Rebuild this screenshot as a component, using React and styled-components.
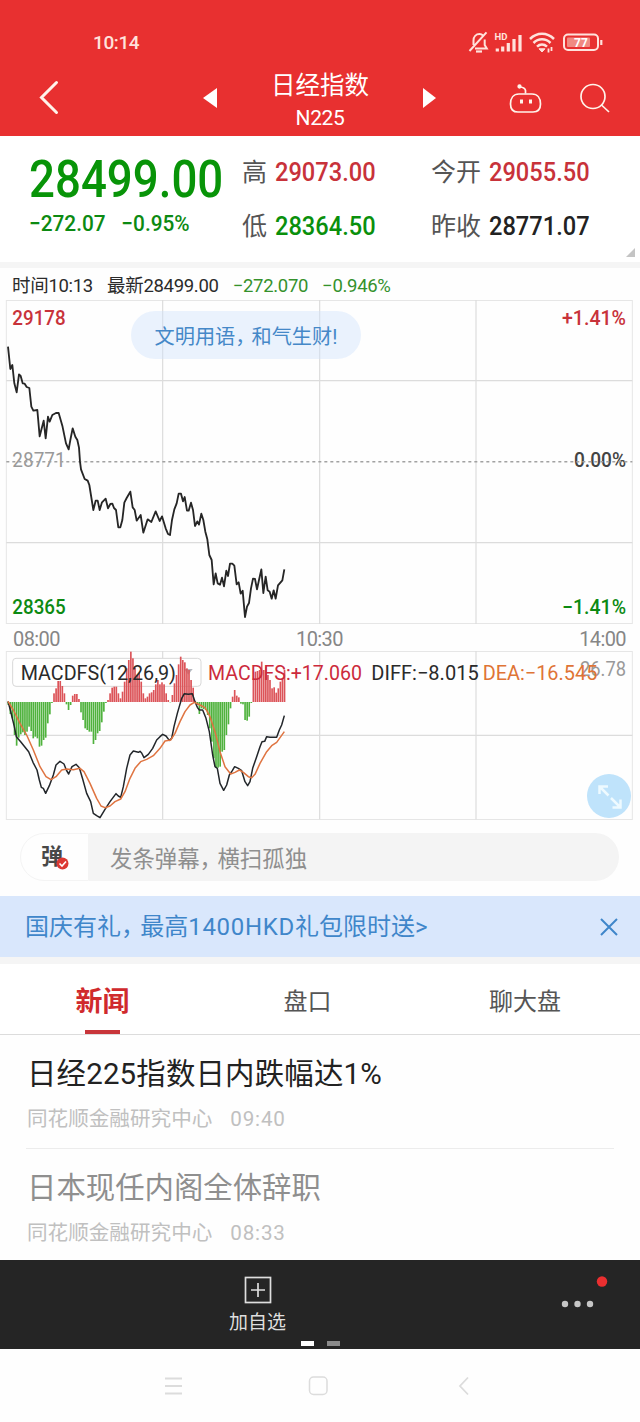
import React from "react";
import styled, { createGlobalStyle } from "styled-components";

const RED = "#c8323a";
const GREEN = "#0c8a12";

const GlobalStyle = createGlobalStyle`
  * {
    box-sizing: border-box;
  }
  body {
    margin: 0;
    background: #fff;
    font-family: Roboto, "Noto Sans CJK SC", sans-serif;
    color: #333;
  }
`;

const Page = styled.div`
  width: 640px;
  height: 1422px;
  overflow: hidden;
  background: #fefefe;
`;

const Header = styled.header`
  height: 136px;
  background: #e83030;
  color: #fff;
`;

const StatusBar = styled.div`
  display: flex;
  align-items: center;
  justify-content: space-between;
  height: 60px;
  padding: 25px 36px 0 93px;
  color: #ffe2dc;
`;

const Clock = styled.span`
  font-size: 19px;
  font-weight: 500;
  letter-spacing: -0.4px;
`;

const TitleBar = styled.div`
  display: grid;
  grid-template-columns: 198px 24px 196px 24px 198px;
  align-items: center;
  height: 76px;
`;

const BackButton = styled.div`
  padding-left: 38px;
  height: 39px;
`;

const TitleText = styled.div`
  text-align: center;
  padding-top: 6px;
`;

const TitleName = styled.div`
  font-size: 24.5px;
  line-height: 33px;
`;

const TitleCode = styled.div`
  font-size: 21px;
  line-height: 32px;
  letter-spacing: -0.4px;
`;

const Tools = styled.div`
  display: flex;
  align-items: center;
  gap: 36px;
  padding-left: 65px;
`;

const Quote = styled.section`
  position: relative;
  display: grid;
  grid-template-columns: 213px 189px 1fr;
  height: 126px;
  padding: 9px 0 0 29px;
  background: #fff;
`;

const LastPrice = styled.div`
  height: 64px;
  line-height: 69px;
  font-size: 51px;
  font-weight: 500;
  color: #089408;
  transform: scaleX(0.895);
  transform-origin: left;
`;

const Change = styled.div`
  display: flex;
  gap: 17px;
  font-size: 22.5px;
  line-height: 28px;
  font-weight: 500;
  color: ${GREEN};
  transform: scaleX(0.925);
  transform-origin: left;
`;

const Field = styled.div`
  display: flex;
  align-items: center;
  gap: 8px;
  height: 54px;
  padding-top: 1px;
  font-size: 25px;
  line-height: 50px;
  color: #555;
`;

const FieldValue = styled.span`
  font-size: 25px;
  font-weight: 500;
  color: ${(props) => props.$color};
  transform: scaleX(0.945);
  transform-origin: left;
`;

const Corner = styled.i`
  position: absolute;
  right: 5px;
  bottom: 5px;
  border-left: 9px solid transparent;
  border-bottom: 9px solid #c4c4c4;
`;

const Divider = styled.div`
  height: ${(props) => props.$height}px;
  background: #f5f5f5;
`;

const InfoLine = styled.div`
  display: flex;
  align-items: center;
  height: 32px;
  padding: 4px 0 0 12px;
  font-size: 18.5px;
  letter-spacing: -0.3px;
  color: #2b2b2b;
  white-space: nowrap;
`;

const InfoItem = styled.span`
  margin-right: 14px;
  line-height: 30px;
  color: ${(props) => props.$color};
`;

const ChartArea = styled.div`
  position: relative;
  height: 324px;
`;

const Chart = styled.svg`
  display: block;
`;

const Bubble = styled.div`
  position: absolute;
  left: 131px;
  top: 11px;
  width: 230px;
  height: 48px;
  border-radius: 24px;
  background: rgba(208, 226, 252, 0.42);
  color: #4588c8;
  font-size: 20.2px;
  line-height: 52px;
  text-align: center;
`;

const Comma = styled.span`
  letter-spacing: -0.2em;
`;

const TimeAxis = styled.div`
  display: flex;
  justify-content: space-between;
  height: 27px;
  padding: 3px 14px 0 13px;
  font-size: 20px;
  line-height: 25px;
  letter-spacing: -0.6px;
  color: #868686;
`;

const MacdArea = styled.div`
  position: relative;
  height: 170px;
`;

const ExpandButton = styled.div`
  position: absolute;
  right: 9px;
  bottom: 3px;
  width: 44px;
  height: 44px;
  border-radius: 50%;
  background: #bfe3fb;
`;

const CommentBar = styled.div`
  display: flex;
  height: 75px;
  padding: 12px 21px 15px 20px;
`;

const DanmuToggle = styled.div`
  display: flex;
  position: relative;
  width: 69px;
  border: 1px solid #f4f4f4;
  border-radius: 24px 0 0 24px;
  padding-left: 20px;
  font-size: 22px;
  line-height: 45px;
  font-weight: 700;
  color: #484848;
`;

const CheckBadge = styled.svg`
  position: absolute;
  left: 35px;
  top: 23px;
`;

const CommentInput = styled.div`
  flex: 1;
  padding-left: 21px;
  border-radius: 0 24px 24px 0;
  background: #f4f4f4;
  font-size: 22.4px;
  line-height: 52px;
  color: #8f8f8f;
`;

const Banner = styled.div`
  display: flex;
  align-items: center;
  justify-content: space-between;
  height: 61px;
  padding: 0 22px 0 25px;
  background: #d9e7fc;
  color: #3f86ca;
  font-size: 24px;
  line-height: 36px;
  white-space: nowrap;
`;

const BannerText = styled.span`
  padding-top: 1px;
`;

const BannerAmount = styled.span`
  letter-spacing: 0.7px;
`;

const Tabs = styled.nav`
  display: grid;
  grid-template-columns: 205px 205px 230px;
  height: 71px;
  background: #fff;
  border-bottom: 1px solid #dcdcdc;
`;

const Tab = styled.div`
  display: flex;
  flex-direction: column;
  align-items: center;
  font-size: ${(props) => (props.$active ? 27 : 24)}px;
  font-weight: ${(props) => (props.$active ? 700 : 400)};
  line-height: 76px;
  color: ${(props) => (props.$active ? "#d02a2d" : "#555")};

  &::after {
    content: "";
    width: 35px;
    height: 4px;
    margin-top: -10px;
    background: ${(props) => (props.$active ? "#c8353a" : "transparent")};
  }
`;

const NewsList = styled.div`
  height: 225px;
  padding: 0 26px;
`;

const NewsItem = styled.article`
  height: 114px;
  padding: 17px 1px 0;
  border-bottom: 1px solid #ececec;

  &:last-child {
    border-bottom: none;
  }
`;

const NewsTitle = styled.div`
  font-size: 29.4px;
  line-height: 44px;
  letter-spacing: ${(props) => (props.$read ? 0 : 0.2)}px;
  color: ${(props) => (props.$read ? "#8f8f8f" : "#222")};
`;

const NewsMeta = styled.div`
  display: flex;
  gap: 18px;
  margin-top: 7px;
  font-size: 20.6px;
  line-height: 32px;
  color: #c0c0c0;
`;

const NewsTime = styled.span`
  letter-spacing: 0.8px;
`;

const BottomBar = styled.footer`
  position: relative;
  display: flex;
  height: 89px;
  background: #252525;
  color: #dedede;
`;

const AddButton = styled.div`
  display: flex;
  flex-direction: column;
  align-items: center;
  width: 515px;
  padding-top: 16px;
  font-size: 19px;
  line-height: 37px;
`;

const MoreButton = styled.div`
  padding: 16px 0 0 46px;
`;

const Pager = styled.div`
  position: absolute;
  left: 301px;
  bottom: 3px;
  display: flex;
  gap: 13px;
`;

const PagerDot = styled.i`
  width: 13px;
  height: 5px;
  background: ${(props) => (props.$active ? "#fff" : "#8b8b8b")};
`;

const SystemNav = styled.div`
  display: grid;
  grid-template-columns: 145px 149px 20px;
  align-items: center;
  height: 73px;
  padding-left: 163px;
`;

const PRICE_LINE =
  "24,140 31,207 37,195 43,250 50,277 57,223 62,228 68,250 74,251 80,261 88,264 94,320 100,332 112,330 119,409 131,362 137,415 144,350 149,365 157,345 168,339 176,339 187,377 198,430 206,448 211,420 218,385 226,410 232,420 237,443 240,485 243,508 254,537 263,542 268,555 280,630 287,602 293,602 299,630 306,607 317,596 324,625 331,612 337,611 342,624 348,630 355,682 361,682 367,660 373,608 380,594 391,575 398,622 404,630 410,662 422,645 430,698 443,658 454,666 467,634 479,663 486,649 497,685 504,702 510,705 516,660 523,628 530,610 536,581 543,581 549,604 554,591 561,632 566,632 573,608 579,630 585,678 592,664 597,674 604,641 610,660 616,695 622,718 628,765 635,780 641,853 647,820 653,850 660,854 666,833 672,859 679,812 684,828 690,791 697,791 703,797 710,853 716,847 722,881 728,872 735,951 741,920 747,909 753,865 759,836 765,837 771,868 777,840 784,808 790,879 797,830 803,871 809,875 815,896 821,871 827,896 834,856 847,841 853,808";

const DIFF_LINE =
  "24,229 31,255 43,305 49,335 62,350 74,365 86,380 99,412 111,435 118,465 124,487 130,490 137,505 148,482 160,450 168,420 180,409 192,417 199,435 206,447 216,425 228,418 238,428 248,462 260,505 272,530 280,565 290,572 300,578 315,553 330,530 348,506 355,513 362,517 370,485 380,430 390,390 400,378 415,382 420,379 425,384 432,398 445,388 458,370 470,345 480,335 488,328 498,333 508,346 515,340 522,305 532,265 545,220 553,206 565,208 577,206 585,230 592,247 598,255 608,255 618,280 628,320 638,390 645,425 652,430 660,475 671,496 680,480 688,450 697,437 704,425 715,430 725,437 735,470 743,482 750,470 758,430 770,395 780,365 786,350 794,349 800,335 810,337 830,337 838,315 845,300 853,272";

const DEA_LINE =
  "24,229 40,255 60,295 80,330 100,375 120,425 138,455 153,464 168,455 185,435 200,432 220,434 240,430 252,440 270,475 290,520 303,543 315,548 330,543 345,530 362,522 375,500 390,460 405,430 422,410 440,403 460,392 480,370 495,348 512,345 525,325 540,290 555,260 570,240 583,232 600,240 615,248 630,275 645,320 660,380 675,425 692,447 705,442 718,435 730,442 745,455 755,458 765,448 780,415 800,380 815,362 830,352 853,320";

const ZERO = 231;

// end of every MACD bar, above or below the zero line
const BARS = [
  240, 267, 280, 330, 362, 338, 328, 322, 330, 320, 305, 318, 340, 335, 340,
  365, 362, 345, 338, 295, 268, 234, 205, 190, 168, 168, 183, 205, 238, 255,
  240, 212, 207, 207, 222, 262, 285, 310, 315, 320, 320, 357, 345, 325, 318,
  292, 260, 234, 225, 205, 188, 185, 185, 205, 220, 200, 170, 130, 105, 80,
  100, 128, 150, 145, 170, 205, 220, 215, 205, 202, 195, 178, 165, 178, 172,
  178, 205, 225, 232, 210, 175, 150, 118, 95, 105, 112, 130, 135, 165, 188,
  228, 240, 267, 250, 252, 255, 270, 310, 350, 400, 428, 428, 425, 380, 375,
  330, 298, 250, 215, 195, 212, 217, 236, 238, 285, 287, 275, 234, 160, 140,
  138, 135, 110, 135, 125, 150, 165, 190, 187, 203, 190, 170, 160, 135,
];

function Label({ width, ...rest }) {
  return <text textLength={width} lengthAdjust="spacingAndGlyphs" {...rest} />;
}

function StatusIcons() {
  return (
    <svg width="136" height="24" viewBox="0 0 136 24" fill="none" stroke="currentColor">
      <path d="M5.500 14V9.500C5.500 5.800 8 3 11.500 3Q13.500 3 15 4.500M16.700 8.500V14L18.800 17.500H7M1.500 20L18.500 1.300" strokeWidth="2" />
      <path d="M8 20.500H14" strokeWidth="2.200" />
      <Label width={13} x="26.500" y="9" fontSize="9" fontWeight="700" fill="currentColor" stroke="none">
        HD
      </Label>
      <path d="M29.300 20.500V17.500M34.700 20.500V15.500M40.300 20.500V12M46 20.500V8M52 20.500V4" strokeWidth="3.200" />
      <path d="M62 8C69 1.100 79 1.100 86 8M65.500 12C70.500 7.100 77.500 7.100 82.500 12M69 15.700C72 12.900 76 12.900 79 15.700" strokeWidth="2.500" />
      <path d="M71 17.800H77L74 21Z" fill="currentColor" />
      <path d="M80.500 17.500V21.500M83.500 16V20" strokeWidth="1.800" />
      <rect x="96" y="3.500" width="34" height="15.500" rx="4" strokeWidth="2" />
      <rect x="99" y="6.500" width="23" height="9.500" rx="1" fill="#f08a82" stroke="none" />
      <path d="M133.300 9V14" strokeWidth="2.200" />
      <text x="106" y="15.500" fontSize="12" fontWeight="700" fill="#fff" stroke="none">
        77
      </text>
    </svg>
  );
}

function PriceChart() {
  return (
    <Chart width="640" height="324" viewBox="0 0 1920 972" fill="none">
      <rect x="19" y="1.500" width="1878" height="969" stroke="#e6e6e6" strokeWidth="3" />
      <path d="M19 242H1897M19 728H1897M488 0V972M959 0V972M1428 0V972" stroke="#dcdcdc" strokeWidth="3.500" />
      <g fontSize="60" fontWeight="500">
        <Label x="37" y="74" width={160} fill={RED}>29178</Label>
        <Label x="37" y="500" width={160} fill="#999" fontWeight="400">28771</Label>
        <Label x="37" y="942" width={160} fill={GREEN}>28365</Label>
        <Label x="1686" y="74" width={192} fill={RED}>+1.41%</Label>
        <Label x="1722" y="500" width={156} fill="#444">0.00%</Label>
        <Label x="1686" y="942" width={192} fill={GREEN}>−1.41%</Label>
      </g>
      <path d="M19 485H1897" stroke="#a2a2a2" strokeWidth="4.500" strokeDasharray="9 9" />
      <polyline points={PRICE_LINE} stroke="#262626" strokeWidth="5.500" strokeLinejoin="round" />
    </Chart>
  );
}

function MacdChart() {
  return (
    <Chart width="640" height="170" viewBox="0 78 1920 510" fill="none">
      <rect x="19" y="79.500" width="1878" height="504" stroke="#e6e6e6" strokeWidth="3" />
      <path d="M19 331H1897M488 78V583M959 78V583M1428 78V583" stroke="#dcdcdc" strokeWidth="3.500" />
      <rect x="38" y="100" width="565" height="84" rx="10" fill="#fff" stroke="#d8d8d8" strokeWidth="3" />
      <path d="M552 132H578L565 149Z" fill="#b5b9c0" />
      {BARS.map((end, i) => (
        <rect
          key={i}
          x={22.5 + i * 6.23}
          y={Math.min(end, ZERO)}
          width="5"
          height={Math.abs(end - ZERO)}
          fill={end > ZERO ? "#4fb23d" : "#dc5358"}
        />
      ))}
      <polyline points={DIFF_LINE} stroke="#22262a" strokeWidth="4.500" strokeLinejoin="round" />
      <polyline points={DEA_LINE} stroke="#df7441" strokeWidth="4.500" strokeLinejoin="round" />
      <g fontSize="60">
        <Label x="62" y="165" width={466} fill="#2a2a2a">MACDFS(12,26,9)</Label>
        <Label x="1740" y="154" width={138} fill="#999">26.78</Label>
        <Label x="624" y="165" width={462} fill="#cc2a3c">MACDFS:+17.060</Label>
        <Label x="1114" y="165" width={322} fill="#2a2a2a">DIFF:−8.015</Label>
        <Label x="1448" y="165" width={344} fill="#df7436">DEA:−16.545</Label>
      </g>
    </Chart>
  );
}

function App() {
  return (
    <Page>
      <GlobalStyle />
      <Header>
        <StatusBar>
          <Clock>10:14</Clock>
          <StatusIcons />
        </StatusBar>
        <TitleBar>
          <BackButton>
            <svg width="22" height="36" fill="none" stroke="#fff3ea" strokeWidth="3" strokeLinecap="round">
              <path d="M18.500 3.500L3.500 18.500L18.500 33.500" />
            </svg>
          </BackButton>
          <svg width="24" height="24">
            <path d="M19 2V22L5 12Z" fill="#fff" />
          </svg>
          <TitleText>
            <TitleName>日经指数</TitleName>
            <TitleCode>N225</TitleCode>
          </TitleText>
          <svg width="24" height="24">
            <path d="M5 2V22L18 12Z" fill="#fff" />
          </svg>
          <Tools>
            <svg width="36" height="32" fill="none" stroke="#fff3ea" strokeWidth="1.700">
              <path d="M12 12H25C30.500 12 33.500 16 33.500 22C33.500 27.500 31 30 26 30H11C6 30 3.500 27.500 3.500 22C3.500 16 6.500 12 12 12Z" />
              <path d="M18.500 11.500V8.500Q18 5.500 13 5" />
              <circle cx="12.500" cy="4.500" r="1.300" fill="#fff3ea" />
              <path d="M14.500 17.500V21.500M23.500 17.500V21.500" strokeWidth="3" />
            </svg>
            <svg width="32" height="32" fill="none" stroke="#fff3ea" strokeWidth="1.700">
              <circle cx="14" cy="14.500" r="12" />
              <path d="M22.500 23L30 30" />
            </svg>
          </Tools>
        </TitleBar>
      </Header>

      <Quote>
        <div>
          <LastPrice>28499.00</LastPrice>
          <Change>
            <span>−272.07</span>
            <span>−0.95%</span>
          </Change>
        </div>
        <div>
          <Field>
            高<FieldValue $color={RED}>29073.00</FieldValue>
          </Field>
          <Field>
            低<FieldValue $color="#0a900c">28364.50</FieldValue>
          </Field>
        </div>
        <div>
          <Field>
            今开<FieldValue $color={RED}>29055.50</FieldValue>
          </Field>
          <Field>
            昨收<FieldValue $color="#222">28771.07</FieldValue>
          </Field>
        </div>
        <Corner />
      </Quote>
      <Divider $height={6} />

      <InfoLine>
        <InfoItem>时间10:13</InfoItem>
        <InfoItem>最新28499.00</InfoItem>
        <InfoItem $color="#35912c">−272.070</InfoItem>
        <InfoItem $color="#35912c">−0.946%</InfoItem>
      </InfoLine>
      <ChartArea>
        <PriceChart />
        <Bubble>
          文明用语<Comma>，</Comma>和气生财!
        </Bubble>
      </ChartArea>
      <TimeAxis>
        <span>08:00</span>
        <span>10:30</span>
        <span>14:00</span>
      </TimeAxis>
      <MacdArea>
        <MacdChart />
        <ExpandButton>
          <svg width="44" height="44" fill="none" stroke="#eefaff" strokeWidth="2.500">
            <path d="M12.500 20V12.500H21M13 13L21.500 21.500M24 24L33 33M33.500 25.500V33.500H25.500" />
          </svg>
        </ExpandButton>
      </MacdArea>

      <CommentBar>
        <DanmuToggle>
          弹
          <CheckBadge width="13" height="13">
            <circle cx="6.500" cy="6.500" r="6" fill="#dc3832" />
            <path d="M3.500 6.500L6 9L10 4.500" fill="none" stroke="#fff" strokeWidth="1.600" />
          </CheckBadge>
        </DanmuToggle>
        <CommentInput>
          发条弹幕<Comma>，</Comma>横扫孤独
        </CommentInput>
      </CommentBar>

      <Banner>
        <BannerText>
          国庆有礼<Comma>，</Comma>最高<BannerAmount>1400HKD</BannerAmount>礼包限时送&gt;
        </BannerText>
        <svg width="18" height="18" stroke="#3f86ca" strokeWidth="2">
          <path d="M1 1L17 17M17 1L1 17" />
        </svg>
      </Banner>
      <Divider $height={7} />

      <Tabs>
        <Tab $active>新闻</Tab>
        <Tab>盘口</Tab>
        <Tab>聊大盘</Tab>
      </Tabs>
      <NewsList>
        <NewsItem>
          <NewsTitle>日经225指数日内跌幅达1%</NewsTitle>
          <NewsMeta>
            <span>同花顺金融研究中心</span>
            <NewsTime>09:40</NewsTime>
          </NewsMeta>
        </NewsItem>
        <NewsItem>
          <NewsTitle $read>日本现任内阁全体辞职</NewsTitle>
          <NewsMeta>
            <span>同花顺金融研究中心</span>
            <NewsTime>08:33</NewsTime>
          </NewsMeta>
        </NewsItem>
      </NewsList>

      <BottomBar>
        <AddButton>
          <svg width="28" height="28" fill="none" stroke="#dedede" strokeWidth="1.700">
            <rect x="1.500" y="1.500" width="25" height="25" />
            <path d="M14 7V21M7 14H21" />
          </svg>
          加自选
        </AddButton>
        <MoreButton>
          <svg width="48" height="36">
            <g fill="#c6c6c6">
              <circle cx="4" cy="28" r="3.200" />
              <circle cx="16.500" cy="28" r="3.200" />
              <circle cx="29" cy="28" r="3.200" />
            </g>
            <circle cx="41" cy="5.500" r="5.200" fill="#ea2f30" />
          </svg>
        </MoreButton>
        <Pager>
          <PagerDot $active />
          <PagerDot />
        </Pager>
      </BottomBar>
      <SystemNav>
        <svg width="20" height="20" stroke="#dcdcdc" strokeWidth="1.800">
          <path d="M2 2.500H19M2 10H19M2 17.500H19" />
        </svg>
        <svg width="20" height="20" fill="none" stroke="#dcdcdc" strokeWidth="1.500">
          <rect x="1.500" y="1" width="17.500" height="17.500" rx="4" />
        </svg>
        <svg width="14" height="20" fill="none" stroke="#dcdcdc" strokeWidth="1.800">
          <path d="M11 1.500L3 10L11 18.500" />
        </svg>
      </SystemNav>
    </Page>
  );
}

export default App;
